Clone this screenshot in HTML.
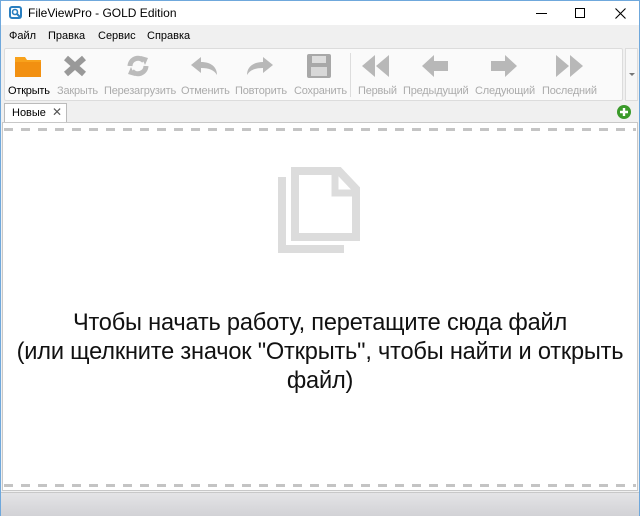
<!DOCTYPE html>
<html><head><meta charset="utf-8"><style>
*{margin:0;padding:0;box-sizing:border-box}
body{width:640px;height:516px;overflow:hidden;background:#f0f0f0;font-family:"Liberation Sans","DejaVu Sans",sans-serif;position:relative;border:1px solid #6fa8dc}
.a{position:absolute}
.lbl{position:absolute;top:84px;font-size:11px;color:#ababab;white-space:nowrap;letter-spacing:-0.2px}
.m{position:absolute;top:29px;font-size:11px;color:#000}
</style></head><body>
<div class="a" style="left:0;top:0;width:638px;height:24px;background:#fff"></div>
<svg class="a" style="left:8px;top:5px" width="14" height="14" viewBox="0 0 14 14"><rect x="1" y="1" width="11" height="11" rx="2" fill="none" stroke="#2a7fc0" stroke-width="2"/><circle cx="6" cy="6" r="2.5" fill="none" stroke="#2a7fc0" stroke-width="1.6"/><path d="M8 8l4 4" stroke="#2a7fc0" stroke-width="2"/></svg>
<div class="a" style="left:27px;top:5px;font-size:12px;color:#000">FileViewPro - GOLD Edition</div>
<div class="a" style="left:535px;top:12px;width:11px;height:1px;background:#000"></div>
<div class="a" style="left:574px;top:7px;width:10px;height:10px;border:1px solid #000"></div>
<svg class="a" style="left:614px;top:7px" width="11" height="11"><path d="M0.5 0.5l10 10M10.5 0.5l-10 10" stroke="#000" stroke-width="1.1"/></svg>
<div class="m" style="left:8px">Файл</div>
<div class="m" style="left:47px">Правка</div>
<div class="m" style="left:97px">Сервис</div>
<div class="m" style="left:146px">Справка</div>
<div class="a" style="left:3px;top:47px;width:619px;height:53px;background:#fafafa;border:1px solid #dcdcdc;border-radius:2px"></div>
<div class="a" style="left:624px;top:47px;width:13px;height:53px;background:#f7f7f7;border:1px solid #dcdcdc"></div>
<div class="a" style="left:628px;top:72px;border:3px solid transparent;border-top-color:#777"></div>
<div class="a" style="left:349px;top:52px;width:1px;height:44px;background:#ddd"></div>
<svg class="a" style="left:13px;top:53px" width="28" height="24"><path d="M1 3h10l2 3h14v17H1z" fill="#f8a21c"/><rect x="1" y="8" width="26" height="15" fill="#f29011"/></svg>
<svg class="a" style="left:62px;top:54px" width="24" height="22"><path d="M3 3l18 16M21 3L3 19" stroke="#999" stroke-width="6"/></svg>
<svg class="a" style="left:124px;top:53px" width="26" height="24"><path d="M5 12a8 8 0 0 1 14-5" stroke="#bbb" stroke-width="5" fill="none"/><path d="M21 12a8 8 0 0 1-14 5" stroke="#bbb" stroke-width="5" fill="none"/><path d="M16 2l7 2-3 7z M10 22l-7-2 3-7z" fill="#bbb"/></svg>
<svg class="a" style="left:188px;top:55px" width="30" height="20"><path d="M2 9l10-8v5c10 0 16 5 16 13-3-5-8-7-16-7v5z" fill="#b8b8b8"/></svg>
<svg class="a" style="left:244px;top:55px" width="30" height="20"><path d="M28 9L18 1v5C8 6 2 11 2 19c3-5 8-7 16-7v5z" fill="#b8b8b8"/></svg>
<svg class="a" style="left:306px;top:53px" width="24" height="24"><rect x="0" y="0" width="24" height="24" rx="2" fill="#a8a8a8"/><rect x="5" y="2" width="14" height="7" fill="#ddd"/><rect x="4" y="13" width="16" height="9" fill="#d8d8d8"/></svg>
<svg class="a" style="left:360px;top:54px" width="30" height="22"><path d="M14 0v22L1 11zM28 0v22L15 11z" fill="#b8b8b8"/></svg>
<svg class="a" style="left:420px;top:54px" width="28" height="22"><path d="M1 11L13 0v6h14v10H13v6z" fill="#b8b8b8"/></svg>
<svg class="a" style="left:489px;top:54px" width="28" height="22"><path d="M27 11L15 0v6H1v10h14v6z" fill="#b8b8b8"/></svg>
<svg class="a" style="left:553px;top:54px" width="30" height="22"><path d="M2 0v22l13-11zM16 0v22l13-11z" fill="#b8b8b8"/></svg>
<div class="lbl" style="left:7px;color:#000">Открыть</div>
<div class="lbl" style="left:56px">Закрыть</div>
<div class="lbl" style="left:103px">Перезагрузить</div>
<div class="lbl" style="left:180px">Отменить</div>
<div class="lbl" style="left:234px">Повторить</div>
<div class="lbl" style="left:293px">Сохранить</div>
<div class="lbl" style="left:357px">Первый</div>
<div class="lbl" style="left:402px">Предыдущий</div>
<div class="lbl" style="left:474px">Следующий</div>
<div class="lbl" style="left:541px">Последний</div>
<div class="a" style="left:3px;top:102px;width:63px;height:20px;background:#fff;border:1px solid #bbb;border-bottom:none"></div>
<div class="a" style="left:11px;top:106px;font-size:11px;color:#000">Новые</div>
<div class="a" style="left:51px;top:104px;font-size:12px;color:#555;font-weight:bold">✕</div>
<svg class="a" style="left:616px;top:104px" width="14" height="14"><circle cx="7" cy="7" r="7" fill="#3a9a2a"/><path d="M7 3v8M3 7h8" stroke="#fff" stroke-width="2.4"/></svg>
<div class="a" style="left:1px;top:121px;width:636px;height:369px;background:#fff;border:1px solid #c8c8c8"></div>
<div class="a" style="left:3px;top:127px;width:632px;height:3px;background:repeating-linear-gradient(90deg,#c4c4c4 0 9px,transparent 9px 17px)"></div>
<div class="a" style="left:3px;top:483px;width:632px;height:3px;background:repeating-linear-gradient(90deg,#c4c4c4 0 9px,transparent 9px 17px)"></div>
<svg class="a" style="left:277px;top:166px" width="82" height="86"><path d="M4 10v72h62" stroke="#dcdcdc" stroke-width="8" fill="none"/><path d="M17 4h44l17 18v48H17z" stroke="#dcdcdc" stroke-width="8" fill="#fff" stroke-linejoin="miter"/><path d="M57 4v22h21" fill="none" stroke="#dcdcdc" stroke-width="7"/></svg>
<div class="a" style="left:-20px;top:308px;width:678px;text-align:center;font-size:23.6px;line-height:29px;color:#111;letter-spacing:-0.2px">Чтобы начать работу, перетащите сюда файл<br>(или щелкните значок "Открыть", чтобы найти и открыть<br>файл)</div>
<div class="a" style="left:0;top:491px;width:638px;height:24px;background:linear-gradient(#e4e4e6,#d2d2d6);border-top:1px solid #c8c8c8"></div>
</body></html>
